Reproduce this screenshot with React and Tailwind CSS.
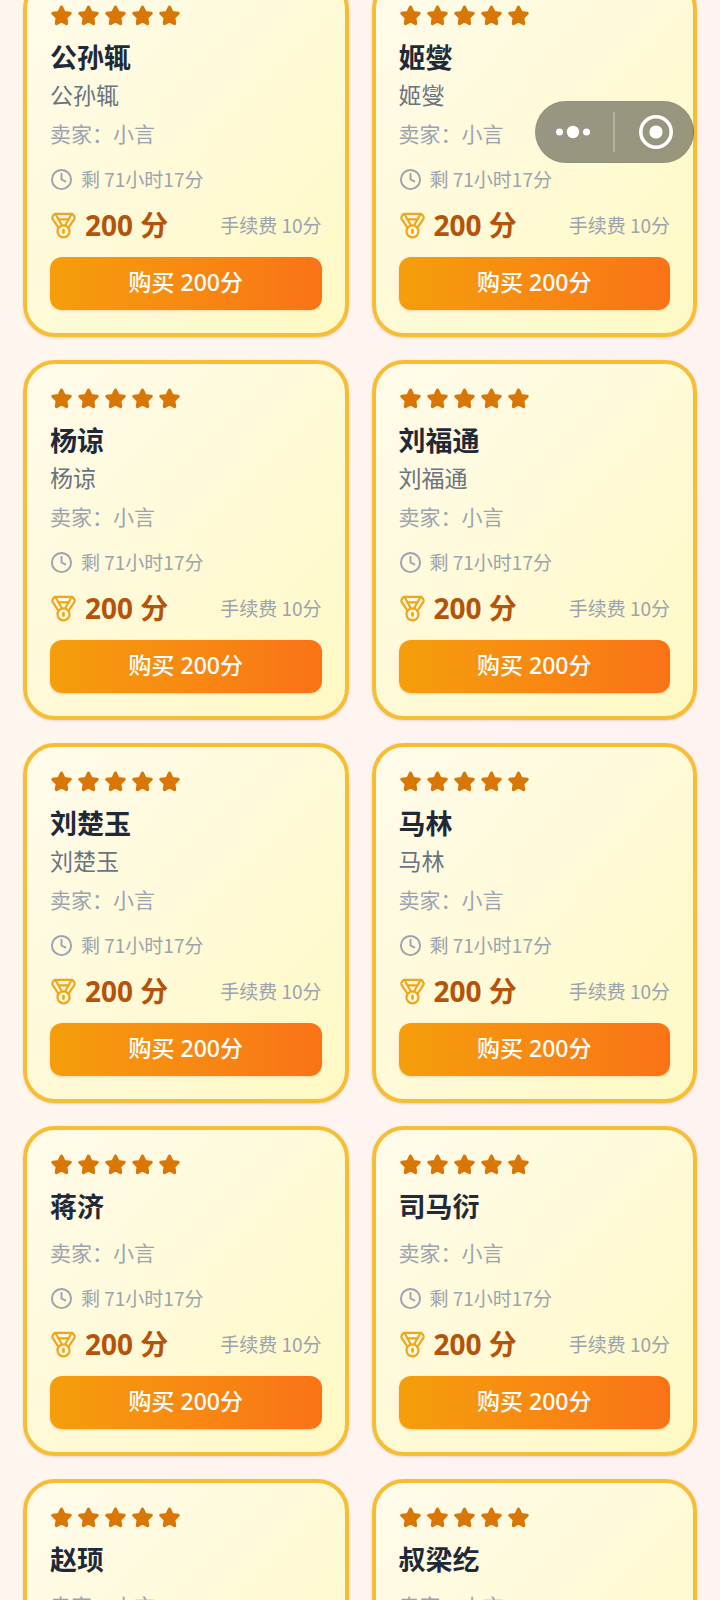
import { Clock } from "lucide-react"

const listings = [
  { id: 1, name: "公孙辄", subtitle: "公孙辄" },
  { id: 2, name: "姬燮", subtitle: "姬燮" },
  { id: 3, name: "杨谅", subtitle: "杨谅" },
  { id: 4, name: "刘福通", subtitle: "刘福通" },
  { id: 5, name: "刘楚玉", subtitle: "刘楚玉" },
  { id: 6, name: "马林", subtitle: "马林" },
  { id: 7, name: "蒋济" },
  { id: 8, name: "司马衍" },
  { id: 9, name: "赵顼" },
  { id: 10, name: "叔梁纥" },
].map((item) => ({ seller: "小言", timeLeft: "71小时17分", price: 200, fee: 10, stars: 5, ...item }))

const StarIcon = () => (
  <svg viewBox="0 0 24 24" className="w-[23px] h-[23px]" aria-hidden="true">
    <path
      d="M12 3.4 L14.6 8.9 L21 9.8 L16.4 14.1 L17.3 20.4 L12 17.5 L6.7 20.4 L7.6 14.1 L3 9.8 L9.4 8.9 Z"
      fill="#d97706"
      stroke="#d97706"
      strokeWidth="3.4"
      strokeLinejoin="round"
    />
  </svg>
)

const MedalIcon = () => (
  <svg
    viewBox="1 1 22 22"
    className="w-[27px] h-[27px] shrink-0"
    fill="none"
    stroke="#f0a51c"
    strokeWidth="1.8"
    strokeLinecap="round"
    strokeLinejoin="round"
    aria-hidden="true"
  >
    <path d="M7.6 13.4 L3.2 6.9 C2.7 6 2.7 5.4 3.1 4.7 L4 3.3 C4.3 2.9 4.8 2.6 5.4 2.6 H18.6 C19.2 2.6 19.7 2.9 20 3.3 L20.9 4.7 C21.3 5.4 21.3 6 20.8 6.9 L16.4 13.4" />
    <path d="M5.8 3.2 L10.4 11.4" />
    <path d="M18.2 3.2 L13.6 11.4" />
    <path d="M8.2 7 H15.8" />
    <circle cx="12" cy="16.8" r="4.9" />
    <path d="M12 15.8 V17.8" strokeWidth="2.2" />
  </svg>
)

const ListingCard = ({ item }) => (
  <article className="flex flex-col rounded-[32px] border-4 border-[#f6bd35] bg-linear-to-br from-[#fffbeb] to-[#fef9c3] p-[23px] shadow-sm">
    <div className="flex gap-1" role="img" aria-label={`${item.stars}星`}>
      {Array.from({ length: item.stars }, (_, i) => (
        <StarIcon key={i} />
      ))}
    </div>

    <h3 className="mt-[11px] mb-[3px] text-[27px] leading-[38px] font-bold text-[#1f2937]">{item.name}</h3>
    {item.subtitle && <p className="text-[23px] leading-[30px] text-[#6b7280]">{item.subtitle}</p>}
    <p className="mt-[10px] text-[21px] leading-[28px] text-[#9ca3af]">卖家：{item.seller}</p>

    {/* Time left */}
    <div className="mt-5 flex items-center gap-2 text-[19px] leading-6 text-[#9ca3af]">
      <Clock size={23} strokeWidth={2} />
      <span>剩 {item.timeLeft}</span>
    </div>

    {/* Price and fee */}
    <div className="mt-[18px] flex items-center justify-between">
      <div className="flex items-center gap-2">
        <MedalIcon />
        <span className="font-['Noto_Sans','Noto_Sans_CJK_SC',sans-serif] text-[28px] leading-8 font-bold text-[#b45309]">
          {item.price} 分
        </span>
      </div>
      <span className="text-[19px] leading-6 text-[#9ca3af]">手续费 {item.fee}分</span>
    </div>

    <button
      type="button"
      className="mt-4 h-[53px] w-full rounded-xl bg-linear-to-r from-[#f59e0b] to-[#f97316] pb-[3px] font-['Noto_Sans','Noto_Sans_CJK_SC',sans-serif] text-[23px] leading-8 font-medium text-white shadow-sm"
    >
      购买 {item.price}分
    </button>
  </article>
)

// Floating mini-program capsule
const Capsule = () => (
  <div className="fixed top-[101px] right-[26px] flex h-[62px] w-[159px] items-center rounded-full border border-black/5 bg-black/40">
    <button type="button" aria-label="更多" className="flex h-full flex-1 items-center justify-center pr-0.5">
      <svg width="36" height="14" viewBox="0 0 36 14" fill="white">
        <circle cx="4.5" cy="7" r="3.5" />
        <circle cx="18" cy="7" r="6.2" />
        <circle cx="31.5" cy="7" r="3.5" />
      </svg>
    </button>
    <span className="h-10 w-0.5 bg-white/25" />
    <button type="button" aria-label="关闭" className="flex h-full flex-1 items-center justify-center pl-1">
      <svg width="34" height="34" viewBox="0 0 34 34">
        <circle cx="17" cy="17" r="15.2" fill="none" stroke="white" strokeWidth="3.5" />
        <circle cx="17" cy="17" r="6.6" fill="white" />
      </svg>
    </button>
  </div>
)

const App = () => {
  return (
    <div className="h-screen overflow-y-auto [scrollbar-width:none] bg-linear-[95deg] from-[#fff7ed] to-[#fef2f2] font-['Noto_Sans_CJK_SC',sans-serif]">
      <main className="-mt-[23px] grid grid-cols-2 gap-[23px] px-[23px] pb-6">
        {listings.map((item) => (
          <ListingCard key={item.id} item={item} />
        ))}
      </main>
      <Capsule />
    </div>
  )
}

export default App
